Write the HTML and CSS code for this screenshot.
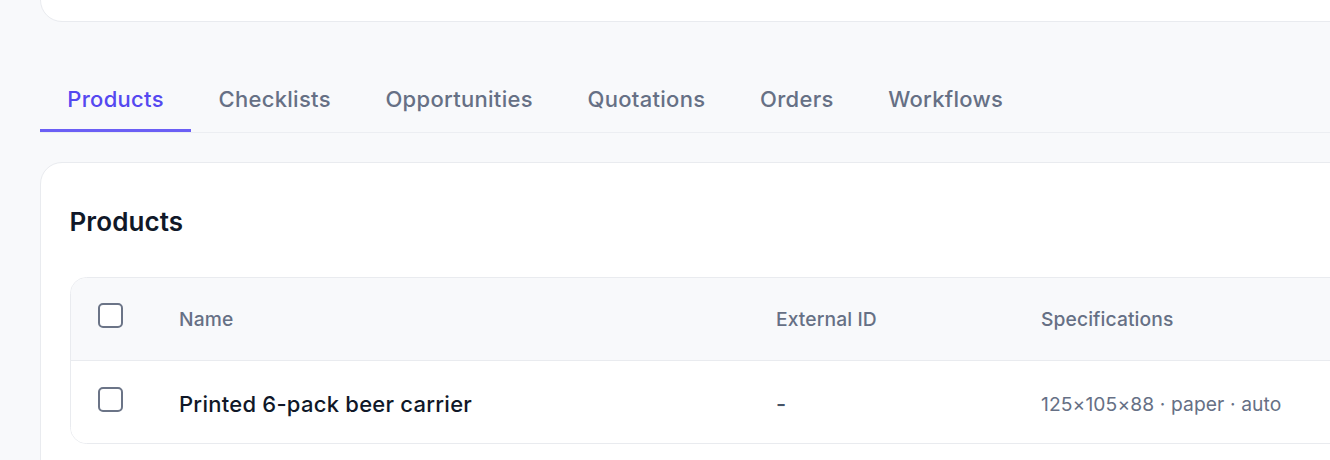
FILE: index.html
```html
<!DOCTYPE html>
<html lang="en">
<head>
<meta charset="utf-8">
<title>Products</title>
<link rel="stylesheet" href="styles.css">
</head>
<body>
<div class="page">
  <div class="top-card"></div>

  <nav class="tabs">
    <a class="tab active">Products</a>
    <a class="tab">Checklists</a>
    <a class="tab">Opportunities</a>
    <a class="tab">Quotations</a>
    <a class="tab">Orders</a>
    <a class="tab">Workflows</a>
  </nav>

  <section class="card">
    <h2 class="card-title">Products</h2>
    <div class="table">
      <div class="row head">
        <div class="cell check"><span class="checkbox"></span></div>
        <div class="cell">Name</div>
        <div class="cell">External ID</div>
        <div class="cell">Specifications</div>
      </div>
      <div class="row body">
        <div class="cell check"><span class="checkbox"></span></div>
        <div class="cell name">Printed 6-pack beer carrier</div>
        <div class="cell ext">-</div>
        <div class="cell spec">125×105×88 · paper · auto</div>
      </div>
    </div>
  </section>
</div>
</body>
</html>
```

FILE: styles.css
```css
* { box-sizing: border-box; }

html, body {
  margin: 0;
  padding: 0;
  background: #f8f9fb;
  overflow: hidden;
  font-family: Inter, "Noto Sans", sans-serif;
}

.page {
  padding-left: 40px;
  width: 1500px;
}

.top-card {
  height: 62px;
  margin-top: -40px;
  background: #fff;
  border: 1.4px solid #e9ebef;
  border-radius: 22px;
}

.tabs {
  display: flex;
  margin-top: 44px;
  border-bottom: 1.4px solid #eceef2;
}

.tab {
  padding: 16.5px 27.3px 13px;
  font-size: 22px;
  line-height: 33px;
  font-weight: 500;
  letter-spacing: 0.3px;
  color: #667085;
  border-bottom: 3.5px solid transparent;
  cursor: pointer;
}

.tab.active {
  color: #5548f0;
  border-bottom-color: #6b5ff5;
}

.card {
  margin-top: 29px;
  background: #fff;
  border: 1.4px solid #e9ebef;
  border-radius: 22px;
  padding: 42px 0 0 28.5px;
  height: 400px;
}

.card-title {
  margin: 0 0 39.5px;
  font-size: 26px;
  line-height: 33px;
  font-weight: 600;
  letter-spacing: 0.1px;
  color: #101828;
}

.table {
  border: 1.4px solid #e9ebef;
  border-radius: 16.5px;
  overflow: hidden;
}

.row {
  display: grid;
  grid-template-columns: 108.5px 597px 265px 1fr;
  align-items: center;
  height: 82px;
}

.row.head {
  background: #f8f9fb;
  border-bottom: 1.4px solid #e9ebef;
  height: 83px;
  font-size: 19.25px;
  font-weight: 500;
  letter-spacing: 0.1px;
  color: #667085;
}

.row.body {
  background: #fff;
}

.row.body .cell {
  padding-top: 4px;
}

.cell.check {
  padding-left: 27.5px;
  display: flex;
  align-items: center;
  padding-bottom: 7px;
}

.row.body .cell.check {
  padding-top: 0;
  padding-bottom: 6px;
}

.checkbox {
  display: block;
  width: 25px;
  height: 25px;
  border: 2px solid #6b7487;
  border-radius: 5px;
  background: #fff;
}

.cell.name {
  font-size: 22px;
  font-weight: 500;
  letter-spacing: 0.25px;
  color: #101828;
}

.cell.ext {
  font-size: 22px;
  font-weight: 500;
  color: #475467;
}

.cell.spec {
  font-size: 19.25px;
  letter-spacing: 0.1px;
  color: #667085;
}
```
